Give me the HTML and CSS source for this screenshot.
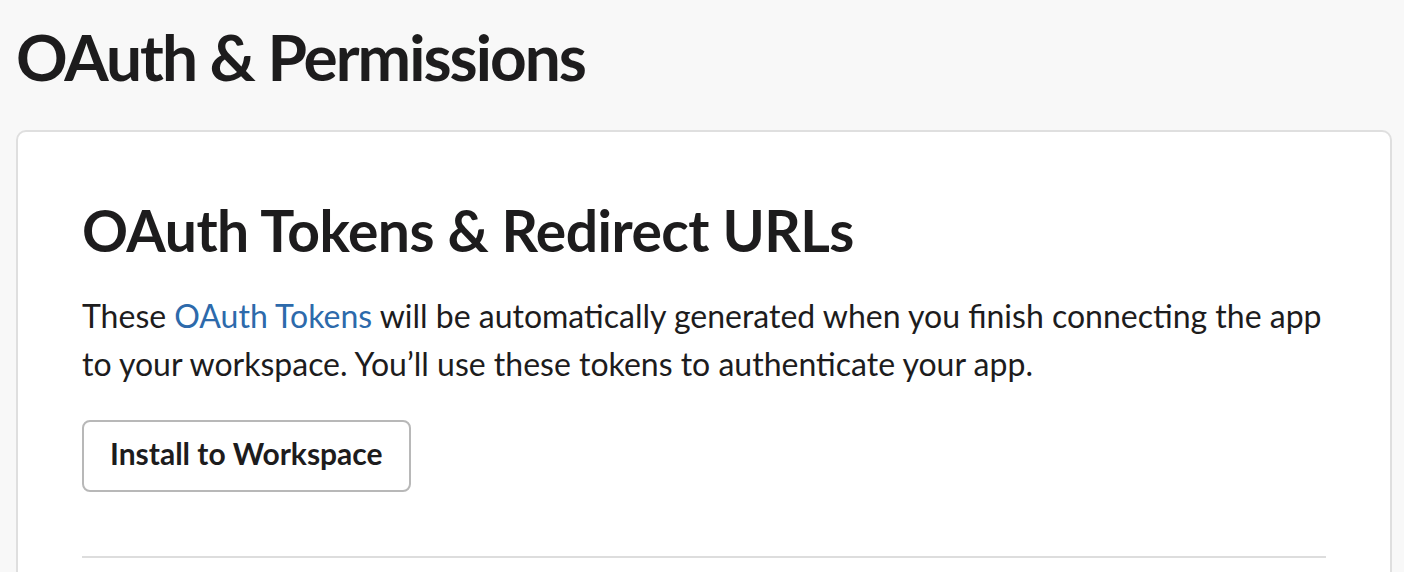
FILE: index.html
```html
<!DOCTYPE html>
<html lang="en">
<head>
<meta charset="utf-8">
<title>OAuth &amp; Permissions</title>
<link rel="stylesheet" href="styles.css">
</head>
<body>
<main class="page">
  <h1 class="page-title">OAuth &amp; Permissions</h1>
  <section class="card">
    <h2 class="card-title">OAuth Tokens &amp; Redirect URLs</h2>
    <p class="card-text">These <a class="link" href="#">OAuth Tokens</a> will be automatically generated when you finish connecting the app to your workspace. You’ll use these tokens to authenticate your app.</p>
    <button class="btn" type="button">Install to Workspace</button>
    <hr class="divider">
  </section>
</main>
</body>
</html>
```

FILE: styles.css
```css
html, body {
  margin: 0;
  padding: 0;
  background: #f8f8f8;
  height: 100%;
  overflow: hidden;
}
body {
  font-family: Lato, "Liberation Sans", sans-serif;
  color: #1d1c1d;
  -webkit-font-smoothing: antialiased;
}
.page {
  padding: 17px 12px 0 16px;
}
.page-title {
  margin: 0;
  font-size: 64px;
  line-height: 80px;
  font-weight: 700;
  letter-spacing: -2px;
}
.card {
  margin-top: 33px;
  background: #fff;
  border: 2px solid #dfdfdf;
  border-radius: 10px;
  padding: 64px 64px 200px;
}
.card-title {
  margin: 0;
  font-size: 57px;
  line-height: 68px;
  font-weight: 700;
  letter-spacing: -0.5px;
}
.card-text {
  margin: 28px 0 0;
  font-size: 32px;
  line-height: 48px;
  font-weight: 400;
}
.link {
  color: #2d6aab;
  text-decoration: none;
}
.btn {
  display: block;
  margin-top: 32px;
  height: 72px;
  padding: 0 26px 5px;
  font-family: inherit;
  font-size: 30px;
  line-height: 63px;
  font-weight: 700;
  color: #1d1c1d;
  background: #fff;
  border: 2px solid #b8b8b8;
  border-radius: 8px;
}
.divider {
  margin: 64px 0 0;
  border: 0;
  height: 2px;
  background: #dddddd;
}
```
